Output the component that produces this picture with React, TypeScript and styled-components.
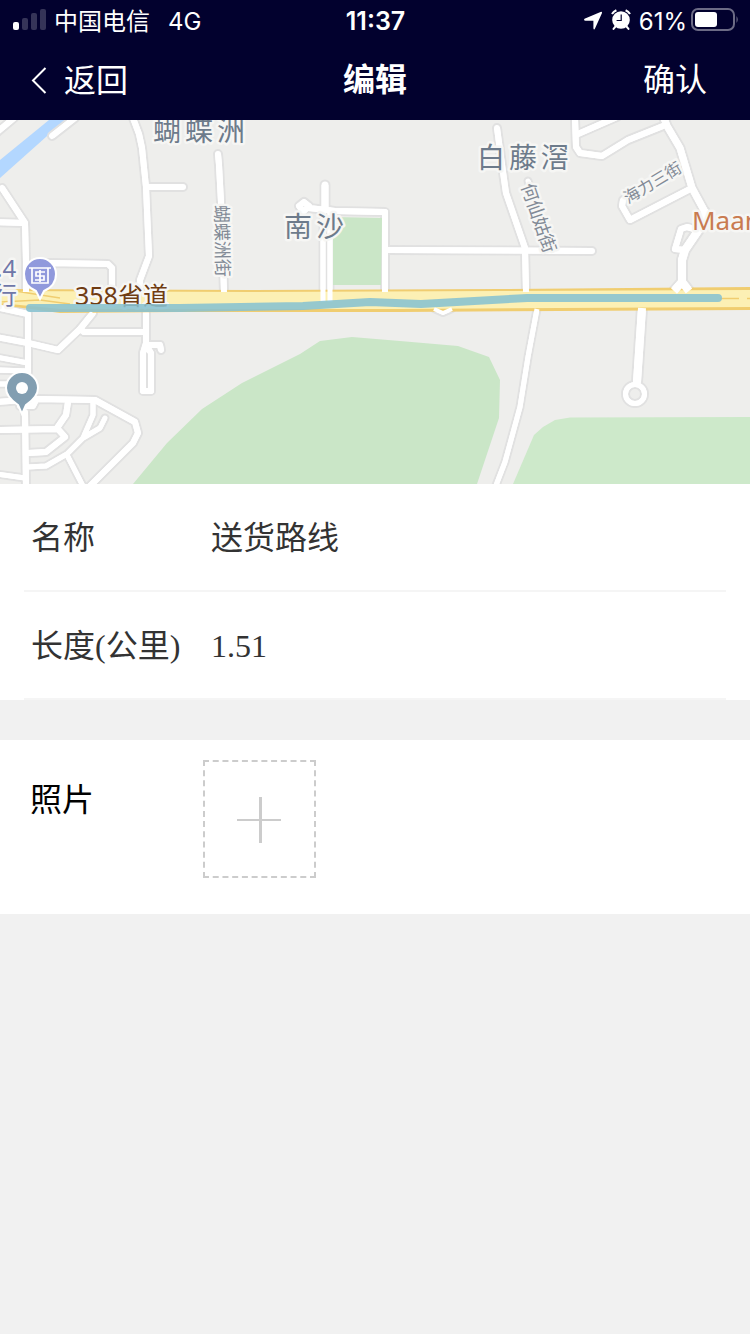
import React from 'react';
import styled, { createGlobalStyle } from 'styled-components';

const sans = `Inter, "Noto Sans CJK SC", sans-serif`;
const serif = `"Liberation Serif", "Noto Sans CJK SC", serif`;

const GlobalStyle = createGlobalStyle`
  *, *::before, *::after { box-sizing: border-box; }
  body {
    margin: 0;
    background: #f1f1f1;
    font-family: ${sans};
    color: #333;
  }
  button, input { font: inherit; color: inherit; border: 0; padding: 0; margin: 0; background: none; }
`;

const Page = styled.div`
  min-height: 100vh;
  display: flex;
  flex-direction: column;
`;

const Top = styled.header`
  background: #02012e;
  color: #fff;
`;

const StatusBar = styled.div`
  display: grid;
  grid-template-columns: 1fr auto 1fr;
  align-items: center;
  height: 40px;
  padding: 0 11px 0 12px;
  font-size: 24px;
  line-height: 36px;
`;

const StatusGroup = styled.div<{ $end?: boolean }>`
  display: flex;
  align-items: center;
  justify-content: ${(p) => (p.$end ? 'flex-end' : 'flex-start')};
  gap: ${(p) => (p.$end ? 4 : 8)}px;
`;

const StatusText = styled.span<{ $gap?: number }>`
  margin-left: ${(p) => p.$gap ?? 0}px;
  padding-top: 3px;
`;

const Time = styled.time`
  padding-top: 2px;
  font-size: 25px;
  font-weight: 600;
`;

const NavBar = styled.nav`
  display: grid;
  grid-template-columns: 1fr auto 1fr;
  align-items: center;
  height: 80px;
  padding: 0 30px;
  font-size: 32px;
  line-height: 48px;
`;

const NavButton = styled.button<{ $end?: boolean }>`
  display: flex;
  align-items: center;
  gap: 16px;
  justify-self: ${(p) => (p.$end ? 'end' : 'start')};
  padding: ${(p) => (p.$end ? '0 13px 0 0' : '2px 0 0')};
  cursor: pointer;
`;

const Title = styled.h1`
  margin: 0;
  font-size: 32px;
  font-weight: 700;
`;

const MapView = styled.svg`
  display: block;
  width: 100%;
  height: 364px;
  background: #eeeeec;
  font-family: "Noto Sans", "Noto Sans CJK SC", sans-serif;
`;

const MapLabel = styled.text<{ $size: number }>`
  font-size: ${(p) => p.$size}px;
  paint-order: stroke;
  stroke: #f6f6f4;
  stroke-width: 5px;
  stroke-linejoin: round;
`;

const Fields = styled.section`
  background: #fff;
  padding: 0 24px;
`;

const Field = styled.div`
  display: flex;
  align-items: center;
  height: 108px;
  padding: 2px 0 0 7px;
  border-bottom: 2px solid #f5f5f5;
  font-family: ${serif};
  font-size: 32px;
  line-height: 48px;
`;

const FieldLabel = styled.label`
  flex: 0 0 180px;
`;

const FieldInput = styled.input`
  flex: 1;
  min-width: 0;
  outline: none;
`;

const Photos = styled.section`
  display: flex;
  margin-top: 40px;
  padding: 20px 30px 36px;
  background: #fff;
`;

const PhotosTitle = styled.h2`
  flex: 0 0 173px;
  margin: 0;
  padding-top: 16px;
  color: #000;
  font-size: 32px;
  font-weight: 400;
  line-height: 48px;
`;

const AddPhoto = styled.button`
  display: grid;
  place-items: center;
  width: 113px;
  height: 118px;
  border: 2px dashed #ccc;
  cursor: pointer;
`;

type Road = [d: string, width: number];

const roads: Road[] = [
  ['M-4 133L14 118', 6],
  ['M52 136L75 118', 6],
  ['M133 118L139 134L142 148L146 187L149 256L140 280V292', 6],
  ['M146 187H183', 6],
  ['M218 154L219 165L221 202L224 292', 6],
  ['M2 188L25 223L26 262V292M-4 222L25 223', 6],
  ['M26 266L50 263L108 264L112 268V292', 6],
  ['M325 185V210', 7],
  ['M323 210V302M330 210V302', 5],
  ['M302 210L299 206L304 202L309 206L304 211ZM309 208L335 211L385 212V292', 6],
  ['M388 250L592 251', 6],
  ['M497 128L500 150L503 172L506 193L525 248L526 292', 6],
  ['M528 181L546 232', 5],
  ['M575 118L576 147L580 153L602 156L628 140L663 126', 6],
  ['M578 134L617 117', 6],
  ['M664 118L667 126L680 148L692 188L705 212', 7],
  ['M705 212L700 228L685 250L682 260V282L674 291M682 282L689 291', 8],
  ['M698 230L687 227L681 229L675 249L685 250', 6],
  ['M692 188L630 220L622 206L623 200', 6],
  ['M537 309L528 357L520 407L505 462L495 488', 5],
  ['M642 308L637 382', 8],
  ['M434 309L443 313L452 309', 4],
  ['M-4 307L28 314V372M25 412L26 488', 6],
  ['M-4 337L28 343L58 350L80 329L93 313', 6],
  ['M80 329L84 332H145', 6],
  ['M-4 357L28 363M-4 370L28 371M-4 384H12', 5],
  ['M-4 402L37 399L95 400L135 422L138 433L133 443L88 488', 6],
  ['M20 406L33 406L36 400', 6],
  ['M-4 430L57 429M68 402L66 415L57 428L65 437L46 452L28 453', 6],
  ['M93 402V415L83 438M105 418L100 428L83 438L67 454L46 466L28 467', 5],
  ['M67 455L84 488M-4 474L25 478', 5],
  ['M146 313V343L143 353V391H151V353L146 345H160L161 350', 6],
];

const Roads = ({ extra = 0 }: { extra?: number }) => (
  <>
    {roads.map(([d, width]) => <path key={d} d={d} strokeWidth={width + extra} />)}
    <circle cx="635" cy="394" r="9.5" strokeWidth={5 + extra} />
  </>
);

const SignalIcon = () => (
  <svg width="34" height="22" viewBox="0 0 34 22" fill="#fff" aria-hidden="true">
    <rect x="1" y="13" width="6" height="8" rx="2" />
    <g opacity=".2">
      <rect x="10" y="9" width="6" height="12" rx="2" />
      <rect x="19" y="4" width="6" height="17" rx="2" />
      <rect x="28" y="0" width="6" height="21" rx="2" />
    </g>
  </svg>
);

const LocationIcon = () => (
  <svg width="24" height="20" viewBox="0 0 24 20" aria-hidden="true">
    <path d="M1.500 8.800L17.500 2q2-.6 1.400 1.300L12 18.600q-1.100 1.900-1.600-.3V10.800H2.500q-2.200-.7-1-2z" fill="#fff" />
  </svg>
);

const AlarmIcon = () => (
  <svg width="20" height="22" viewBox="0 0 20 22" aria-hidden="true">
    <circle cx="10" cy="11" r="8.800" fill="#fff" />
    <path d="M1 5A10 10 0 0 1 5.400 1.300M19 5A10 10 0 0 0 14.600 1.300" stroke="#fff" strokeWidth="2.200" fill="none" />
    <path d="M4.500 17.500L2.500 19.900M15.500 17.500L17.500 19.900" stroke="#fff" strokeWidth="2" strokeLinecap="round" />
    <path d="M10.200 5.500V11.500H5.600" stroke="#02012e" strokeWidth="1.200" fill="none" />
  </svg>
);

const BatteryIcon = () => (
  <svg width="48" height="24" viewBox="0 0 48 24" aria-hidden="true">
    <rect x="1" y="1" width="42" height="21" rx="6" fill="none" stroke="#fff" strokeOpacity=".42" strokeWidth="2" />
    <rect x="4" y="4" width="22" height="15" rx="3" fill="#fff" />
    <path d="M45.500 8q2.500 3.500 0 7z" fill="#fff" opacity=".42" />
  </svg>
);

const BackIcon = () => (
  <svg width="18" height="28" viewBox="0 0 18 28" fill="none" stroke="#fff" strokeWidth="2" aria-hidden="true">
    <path d="M15.500 1L3 13.500L15.500 26" />
  </svg>
);

const PlusIcon = () => (
  <svg width="46" height="48" viewBox="0 0 46 48" fill="#ccc" aria-hidden="true">
    <rect x="0" y="24" width="44" height="2" />
    <rect x="22" y="2" width="3" height="46" />
  </svg>
);

const RouteMap = () => (
  <MapView viewBox="0 120 750 364" preserveAspectRatio="xMidYMid slice" role="img" aria-label="送货路线地图">
    <path d="M0 160L49 120H65L0 178Z" fill="#b3d7ff" />
    <path d="M133 484L167 443L202 409L242 383L300 354L320 341L352 337L400 341L458 346L489 357L500 380L499 418L477 484Z" fill="#cae6c7" />
    <path d="M513 484L534 435L543 427L555 420L570 417.500L750 417V484Z" fill="#cde9ca" />

    <g fill="none" strokeLinecap="round" strokeLinejoin="round">
      <g stroke="#e1e1e1"><Roads extra={4} /></g>
      <g stroke="#fff"><Roads /></g>
    </g>
    <path d="M333 217L382 218L381 285H333Z" fill="#cae6c7" />

    <path d="M0 289L250 290L500 289L750 287V310L560 311L400 312L180 312L60 313L0 305Z" fill="#f0cd70" />
    <path d="M0 291L250 292L500 291L750 290V307L560 308L400 309L180 309L60 309L0 303Z" fill="#fcf0b4" />
    <path d="M0 302L40 300L70 304M15 291L60 298" stroke="#f0cd70" fill="none" strokeWidth="1.500" />

    {/* Side roads open onto the highway with flat ends */}
    <g fill="none" stroke="#fff" strokeLinejoin="round"><Roads /></g>
    <path d="M720 298.500H739M747 298.500H750" stroke="#f0cd70" strokeWidth="1.500" />

    <MapLabel $size={25} x="75" y="305" fill="#703c12">358省道</MapLabel>
    <path d="M30 308L180 308L303 306L370 302L421 304L527 298H718" fill="none" stroke="#88c2d0" strokeOpacity=".88" strokeWidth="8" strokeLinecap="round" strokeLinejoin="round" />

    <MapLabel $size={28} x="153 185 217" y="141" fill="#6d7b8b">蝴蝶洲</MapLabel>
    <MapLabel $size={28} x="284 316" y="237" fill="#6d7b8b">南沙</MapLabel>
    <MapLabel $size={28} x="477 509 541" y="168" fill="#6d7b8b">白藤滘</MapLabel>
    <MapLabel $size={18} fill="#828a96" transform="translate(215 205) rotate(89)">蝴蝶洲街</MapLabel>
    <MapLabel $size={18} fill="#828a96" transform="translate(521 186) rotate(71)">何仙姑街</MapLabel>
    <MapLabel $size={16} fill="#828a96" transform="translate(628 204) rotate(-31)">海力三街</MapLabel>
    <MapLabel $size={26} x="692" y="230" fill="#c97b50">Maan</MapLabel>
    <MapLabel $size={24} x="-4" y="277" fill="#6f77a8">.4</MapLabel>
    <MapLabel $size={24} x="-7" y="304" fill="#6f77a8">行</MapLabel>

    <g stroke="#fff" strokeWidth="2">
      <path d="M40 299L36 291Q24 286 24 274A16 16 0 0 1 56 274Q56 286 44 291Z" fill="#9099dc" />
      <path d="M22 414L18 405Q6 397 6 388A16 16 0 0 1 38 388Q38 397 26 405Z" fill="#829eb1" />
    </g>
    <path d="M29 268H51M32 268V283H48V268M45 272H36V276H44V280H35M40 270V282" fill="none" stroke="#fff" strokeWidth="1.700" />
    <circle cx="22" cy="388" r="6" fill="#fff" />
  </MapView>
);

export default function App() {
  return (
    <Page>
      <GlobalStyle />
      <Top>
        <StatusBar>
          <StatusGroup>
            <SignalIcon />
            <StatusText>中国电信</StatusText>
            <StatusText $gap={10}>4G</StatusText>
          </StatusGroup>
          <Time>11:37</Time>
          <StatusGroup $end>
            <LocationIcon />
            <AlarmIcon />
            <StatusText $gap={4}>61%</StatusText>
            <BatteryIcon />
          </StatusGroup>
        </StatusBar>
        <NavBar>
          <NavButton type="button"><BackIcon />返回</NavButton>
          <Title>编辑</Title>
          <NavButton type="button" $end>确认</NavButton>
        </NavBar>
      </Top>
      <main>
        <RouteMap />
        <Fields>
          <Field>
            <FieldLabel htmlFor="name">名称</FieldLabel>
            <FieldInput id="name" defaultValue="送货路线" />
          </Field>
          <Field>
            <FieldLabel htmlFor="length">长度(公里)</FieldLabel>
            <FieldInput id="length" defaultValue="1.51" readOnly />
          </Field>
        </Fields>
        <Photos>
          <PhotosTitle>照片</PhotosTitle>
          <AddPhoto type="button" aria-label="添加照片"><PlusIcon /></AddPhoto>
        </Photos>
      </main>
    </Page>
  );
}
